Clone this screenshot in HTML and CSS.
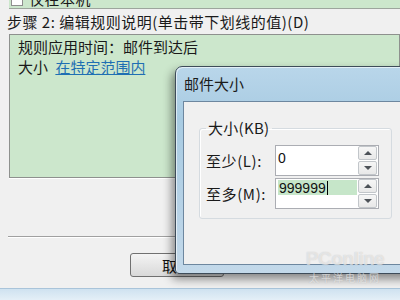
FILE: index.html
```html
<!DOCTYPE html>
<html lang="zh-CN">
<head>
    <meta charset="UTF-8">
    <title>邮件大小</title>
    <link rel="stylesheet" href="styles.css">
</head>
<body>
    <div class="page">
        <div class="top-strip">
            <span class="check"></span>
            <span class="top-text">仅在本机</span>
        </div>

        <div class="step-title">步骤 2: 编辑规则说明(单击带下划线的值)(D)</div>

        <div class="rule-box">
            <div class="rule-line">规则应用时间：邮件到达后</div>
            <div class="rule-line">大小 <a class="rule-link" href="#">在特定范围内</a></div>
        </div>

        <div class="separator"></div>

        <div class="btn-row">
            <button class="btn">取消</button>
        </div>

        <div class="taskbar"></div>
    </div>

    <div class="dialog">
        <div class="dialog-title">邮件大小</div>
        <div class="dialog-client">
            <fieldset class="group">
                <legend class="group-label">大小(KB)</legend>
                <div class="fields">
                    <label class="field-label">至少(L):</label>
                    <div class="spin">
                        <div class="spin-input">0</div>
                        <div class="spin-buttons">
                            <span class="spin-btn"><i class="arrow-up"></i></span>
                            <span class="spin-btn"><i class="arrow-down"></i></span>
                        </div>
                    </div>

                    <label class="field-label">至多(M):</label>
                    <div class="spin">
                        <div class="spin-input">
                            <div class="selected">999999<span class="caret"></span></div>
                        </div>
                        <div class="spin-buttons">
                            <span class="spin-btn"><i class="arrow-up"></i></span>
                            <span class="spin-btn"><i class="arrow-down"></i></span>
                        </div>
                    </div>
                </div>
            </fieldset>
        </div>
    </div>

    <div class="watermark">
        <div class="wm-logo">PConline</div>
        <div class="wm-sub">太平洋电脑网</div>
    </div>
</body>
</html>
```

FILE: styles.css
```css
* {
    margin: 0;
    padding: 0;
    box-sizing: border-box;
}

body {
    width: 400px;
    height: 300px;
    overflow: hidden;
    position: relative;
    background: #f0f0f0;
    color: #1a1a1a;
    font-family: "Noto Sans CJK SC", "DejaVu Sans", sans-serif;
    font-size: 15px;
}

.page {
    display: flex;
    flex-direction: column;
    height: 300px;
}

/* top row, mostly scrolled out of view */
.top-strip {
    height: 9px;
    margin-left: 9px;
    background: #cce7cc;
    border-bottom: 1px solid #9da59d;
    display: flex;
    align-items: flex-start;
    overflow: hidden;
}

.check {
    width: 12px;
    height: 12px;
    margin: -6px 6px 0 2px;
    background: #ffffff;
    border: 1px solid #8f8f8f;
    flex-shrink: 0;
}

.top-text {
    line-height: 16px;
    margin-top: -9px;
    letter-spacing: 0.5px;
}

.step-title {
    height: 25px;
    line-height: 25px;
    padding-left: 7px;
    letter-spacing: 0.5px;
    white-space: nowrap;
}

.rule-box {
    margin-left: 9px;
    height: 144px;
    background: #cce7cc;
    border: 1px solid #8e918e;
    box-shadow: 0 1px 0 #ffffff;
    padding: 2px 8px;
}

.rule-line {
    line-height: 20px;
}

.rule-link {
    color: #1f6fb3;
    text-decoration: underline;
    margin-left: 4px;
}

.separator {
    margin: 58px 0 0 8px;
    height: 2px;
    border-top: 1px solid #a0a0a0;
    border-bottom: 1px solid #ffffff;
}

.btn-row {
    margin-top: 15px;
    padding-left: 130px;
}

.btn {
    width: 94px;
    height: 24px;
    border: 1px solid #707070;
    border-radius: 3px;
    background: linear-gradient(#f4f4f4, #e6e6e6 50%, #d9d9d9);
    font-family: "Noto Sans CJK SC", sans-serif;
    font-size: 15px;
    color: #111111;
}

.taskbar {
    margin-top: 11px;
    height: 12px;
    background: linear-gradient(#cfe2f0, #e4eff7);
    border-top: 1px solid #a9c4da;
}

/* dialog window */
.dialog {
    position: absolute;
    left: 175px;
    top: 66px;
    width: 240px;
    height: 208px;
    border: 1px solid #3e4c59;
    border-radius: 7px 7px 4px 4px;
    background: linear-gradient(#b9d6ea, #a8cbe2 25%, #b7d2e6 70%, #c3d9ea);
    box-shadow: -3px 5px 10px rgba(0, 0, 0, 0.45), inset 1px 1px 0 rgba(255, 255, 255, 0.6);
    padding: 0 0 8px 7px;
    display: flex;
    flex-direction: column;
}

.dialog-title {
    height: 34px;
    line-height: 34px;
    padding-left: 1px;
    color: #1b1b1b;
}

.dialog-client {
    flex: 1;
    background: #f0f0f0;
    border: 1px solid #6d879f;
    border-right: none;
    padding-left: 15px;
}

.group {
    margin-top: 18px;
    width: 193px;
    border: 1px solid #d5dbe0;
    border-radius: 3px;
    padding: 9px 6px 9px 6px;
    box-shadow: inset 1px 1px 0 #ffffff;
}

.group-label {
    padding: 0 2px;
    line-height: 16px;
    letter-spacing: 0.3px;
}

.fields {
    display: grid;
    grid-template-columns: 69px 104px;
    row-gap: 2px;
}

.field-label {
    line-height: 16px;
    padding-top: 8px;
    white-space: nowrap;
    letter-spacing: 0.6px;
}

.spin {
    display: flex;
    height: 31px;
    border: 1px solid #abadb3;
    background: #ffffff;
}

.spin-input {
    width: 82px;
    padding: 4px 1px;
    font-family: "Liberation Sans", sans-serif;
    font-size: 14px;
    line-height: 16px;
    color: #111111;
}

.spin-input:first-child {
    padding-left: 2px;
}

.selected {
    background: #c6e6c9;
    height: 15px;
    margin-top: -3px;
    padding-left: 1px;
    display: flex;
    align-items: center;
}

.caret {
    display: inline-block;
    width: 1px;
    height: 14px;
    background: #000000;
    margin-left: 1px;
}

.spin-buttons {
    width: 20px;
    display: flex;
    flex-direction: column;
    gap: 1px;
    padding: 0 1px 0 0;
}

.spin-btn {
    flex: 1;
    display: flex;
    align-items: center;
    justify-content: center;
    background: linear-gradient(#f6f6f6, #e8e8e8);
    border: 1px solid #c2c6ca;
    border-radius: 2px;
}

.arrow-up {
    border-left: 4px solid transparent;
    border-right: 4px solid transparent;
    border-bottom: 4px solid #4d5258;
}

.arrow-down {
    border-left: 4px solid transparent;
    border-right: 4px solid transparent;
    border-top: 4px solid #4d5258;
}

/* faint site watermark over the corner */
.watermark {
    position: absolute;
    left: 290px;
    top: 248px;
    width: 110px;
    text-align: center;
    color: rgba(255, 255, 255, 0.55);
    text-shadow: 0 0 1px rgba(150, 150, 150, 0.5);
    pointer-events: none;
}

.wm-logo {
    font-family: "Liberation Sans", sans-serif;
    font-size: 19px;
    font-weight: bold;
    line-height: 22px;
    letter-spacing: -0.5px;
}

.wm-sub {
    font-size: 10px;
    line-height: 12px;
    margin-top: 2px;
    letter-spacing: 2px;
}
```
